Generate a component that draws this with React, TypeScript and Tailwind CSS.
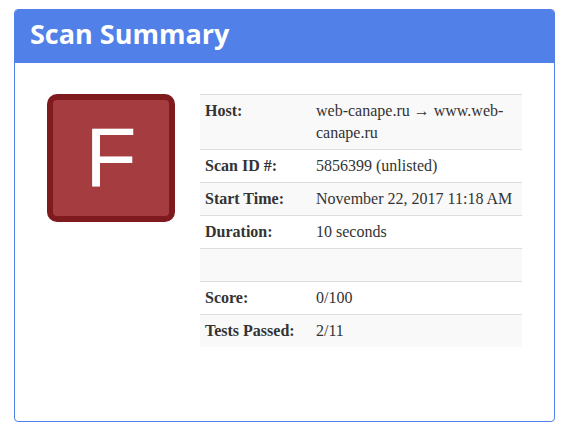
const rows: { label: string; value: string }[] = [
  { label: "Host:", value: "web-canape.ru → www.web-canape.ru" },
  { label: "Scan ID #:", value: "5856399 (unlisted)" },
  { label: "Start Time:", value: "November 22, 2017 11:18 AM" },
  { label: "Duration:", value: "10 seconds" },
  { label: "", value: "" },
  { label: "Score:", value: "0/100" },
  { label: "Tests Passed:", value: "2/11" },
]

export default function App() {
  return (
    <div className="w-[567px] h-[430px] bg-white pt-[9px] pl-[14px]">
      <div className="w-[541px] h-[413px] border border-[#5280e9] rounded-[4px] overflow-hidden flex flex-col">
        <div className="h-[53px] shrink-0 bg-[#5280e9] px-[15px] flex items-center">
          <h1 className="text-white text-[27px] font-bold font-['Open_Sans',sans-serif] leading-none -mt-[7px]">
            Scan Summary
          </h1>
        </div>
        <div className="flex pt-[31px] pl-[32px]">
          <div className="w-[128px] h-[128px] rounded-[10px] border-[6px] border-[#7f1b1f] bg-[#a53c40] flex items-center justify-center">
            <span className="text-white text-[84px] leading-none font-['Liberation_Sans',sans-serif] -mt-[2px]">
              F
            </span>
          </div>
          <table className="ml-[25px] w-[322px] border-collapse font-['Liberation_Serif',serif] text-[16px] leading-[22px] text-[#333]">
            <tbody>
              {rows.map((r, i) => (
                <tr key={i} className={i % 2 === 0 ? "bg-[#f9f9f9]" : "bg-white"}>
                  <th className={`w-[111px] text-left align-top font-bold px-[5px] py-[5px] border-t border-[#ddd] ${r.label === "" ? "h-[33px]" : ""}`}>
                    {r.label}
                  </th>
                  <td className="align-top px-[5px] py-[5px] border-t border-[#ddd]">{r.value}</td>
                </tr>
              ))}
            </tbody>
          </table>
        </div>
      </div>
    </div>
  )
}
